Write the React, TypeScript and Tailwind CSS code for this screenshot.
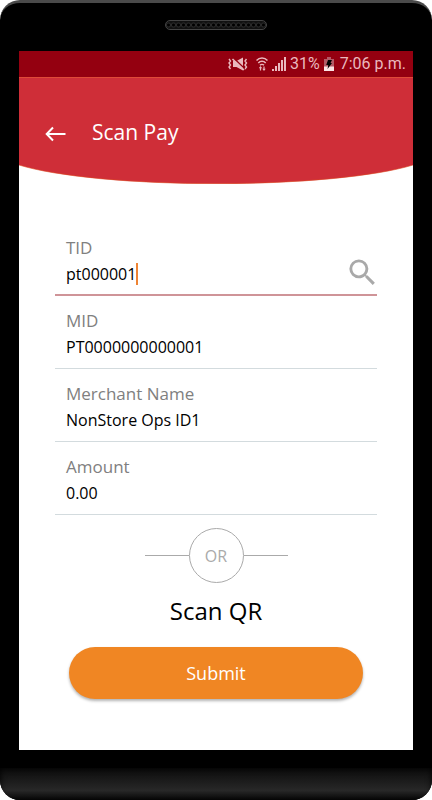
import { MdSearch } from "react-icons/md";

const fields = [
  { id: "tid", label: "TID", value: "pt000001", active: true },
  { id: "mid", label: "MID", value: "PT0000000000001", active: false },
  { id: "merchant", label: "Merchant Name", value: "NonStore Ops ID1", active: false },
  { id: "amount", label: "Amount", value: "0.00", active: false },
];

function StatusBar() {
  return (
    <div className="flex h-[26px] items-center justify-end bg-[#940010] pr-[7px] font-[Roboto,sans-serif] text-[16px] leading-5 text-[#eab9be]">
      {/* Vibrate / muted */}
      <svg width="20" height="14" viewBox="0 0 20 14" fill="none" stroke="currentColor" className="mr-2">
        <path d="M1 2l1.500 2L1 6l1.500 2L1 10l1.500 2M18.500 2L17 4l1.500 2L17 8l1.500 2-1.500 2" strokeWidth="1.400" />
        <path d="M5 4h3.500L15 .5v13L8.500 10H5z" fill="currentColor" stroke="none" />
        <path d="M5.500 1l11 10.500" stroke="#940010" strokeWidth="1.500" />
        <path d="M4.500 2l11.500 11" strokeWidth="1.600" />
      </svg>
      {/* Wifi */}
      <svg width="12" height="14" viewBox="0 0 12 14" fill="none" stroke="currentColor" strokeWidth="1.500" className="mr-1">
        <path d="M.5 3.500C3.500.3 8.500.3 11.500 3.500M2.300 6c2.100-2.200 5.300-2.200 7.400 0M4 8.300c1.200-1.200 2.800-1.200 4 0" />
        <path d="M4.500 13.500V10M8 9.500v3" strokeWidth="1.200" />
        <path d="M2.800 11.200L4.500 9l1.700 2.200zM6.300 11.800L8 14l1.700-2.200z" fill="currentColor" stroke="none" />
      </svg>
      {/* Signal */}
      <svg width="14" height="14" viewBox="0 0 14 14" fill="currentColor" className="mr-1">
        <path d="M0 12h2v2H0zM3 9h2v5H3zM6 6h2v8H6zM9 3h2v11H9z" />
        <path d="M12 0h2v14h-2z" />
      </svg>
      <span>31%</span>
      {/* Battery */}
      <svg width="10" height="14" viewBox="0 0 10 14" className="mr-1.5 ml-1">
        <path d="M3 0h4v2h3v12H0V2h3z" fill="#b35a66" />
        <path d="M0 9.500h10V14H0z" fill="#fbe3e5" />
        <path d="M4 3h4L6.500 6H8l-4.500 6 .8-4H2.200z" fill="#000" />
      </svg>
      <span>7:06 p.m.</span>
    </div>
  );
}

function Header() {
  return (
    <header>
      <div className="flex h-[88px] items-end border-t border-[#e04a38] bg-[#cf2e38] px-[26px] pb-[19px] text-white">
        <button type="button" aria-label="Back" className="mr-[26px] flex h-7 items-center pt-1">
          <svg width="21" height="16" viewBox="0 0 21 16" fill="none" stroke="currentColor" strokeWidth="2">
            <path d="M20.500 8H2M8 1.500L1.700 8 8 14.500" />
          </svg>
        </button>
        <h1 className="text-[21px] leading-7">Scan Pay</h1>
      </div>
      <svg viewBox="0 0 394 19" preserveAspectRatio="none" className="block h-[19px] w-full">
        <path d="M0 0A220 33.700 0 0 0 394 0z" fill="#cf2e38" />
        <path d="M0 0A220 33.700 0 0 0 394 0" fill="none" stroke="#dc4a22" strokeWidth=".6" />
      </svg>
    </header>
  );
}

export default function App() {
  return (
    <div className="flex min-h-screen flex-col overflow-hidden rounded-[20px] border-t-[3px] border-[#4a4a4a] bg-black font-['Open_Sans','Noto_Sans',sans-serif]">
      {/* Speaker */}
      <div className="flex h-12 justify-center pt-[17px]">
        <div className="h-[10px] w-[102px] rounded-full border border-[#444] bg-[#111] bg-[radial-gradient(circle,#000_1px,#2a2a2a_2px,transparent_3px)] bg-[size:5px_8px]" />
      </div>

      <div className="mx-[19px] flex flex-1 flex-col bg-white">
        <StatusBar />
        <Header />

        <form className="flex flex-col px-9 pt-[39px]">
          {fields.map((field) => (
            <div
              key={field.id}
              className={`flex h-[73px] items-end justify-between pl-[11px] ${
                field.active ? "border-b-2 border-[#cf9498] pb-1.5" : "border-b border-[#d3dbde] pb-[7px]"
              }`}
            >
              <div>
                <label htmlFor={field.id} className="block text-[17px] leading-6 text-[#808080]">
                  {field.label}
                </label>
                <div className="flex h-7 items-center">
                  <input
                    id={field.id}
                    type="text"
                    defaultValue={field.value}
                    className="field-sizing-content text-[16px] leading-6 text-black outline-none"
                  />
                  {field.active && <span className="h-[22px] w-[2px] bg-[#ee8434]" />}
                </div>
              </div>
              {field.active && (
                <button type="button" aria-label="Search" className="-mr-[3px] flex h-8 items-center">
                  <MdSearch size={35} color="#a9a9a9" />
                </button>
              )}
            </div>
          ))}

          <div className="mt-[13px] flex items-center justify-center">
            <span className="h-px w-11 bg-[#aaa]" />
            <span className="flex size-[55px] items-center justify-center rounded-full border border-[#aaa] text-[16px] text-[#aaa]">
              OR
            </span>
            <span className="h-px w-11 bg-[#aaa]" />
          </div>

          <a href="#scan" className="mt-3 self-center text-[24px] leading-8 text-black">
            Scan QR
          </a>

          <button
            type="submit"
            className="mx-[14px] mt-5 h-[52px] rounded-full bg-[#f08623] text-[18px] text-white shadow-[0_2px_3px_rgba(0,0,0,0.3)]"
          >
            Submit
          </button>
        </form>
      </div>

      {/* Bottom bezel */}
      <div className="mt-[18px] h-8 bg-linear-to-b from-[#0c0c0c] via-[#282828] via-70% to-[#0a0a0a] shadow-[inset_0_0_6px_#000]" />
    </div>
  );
}
